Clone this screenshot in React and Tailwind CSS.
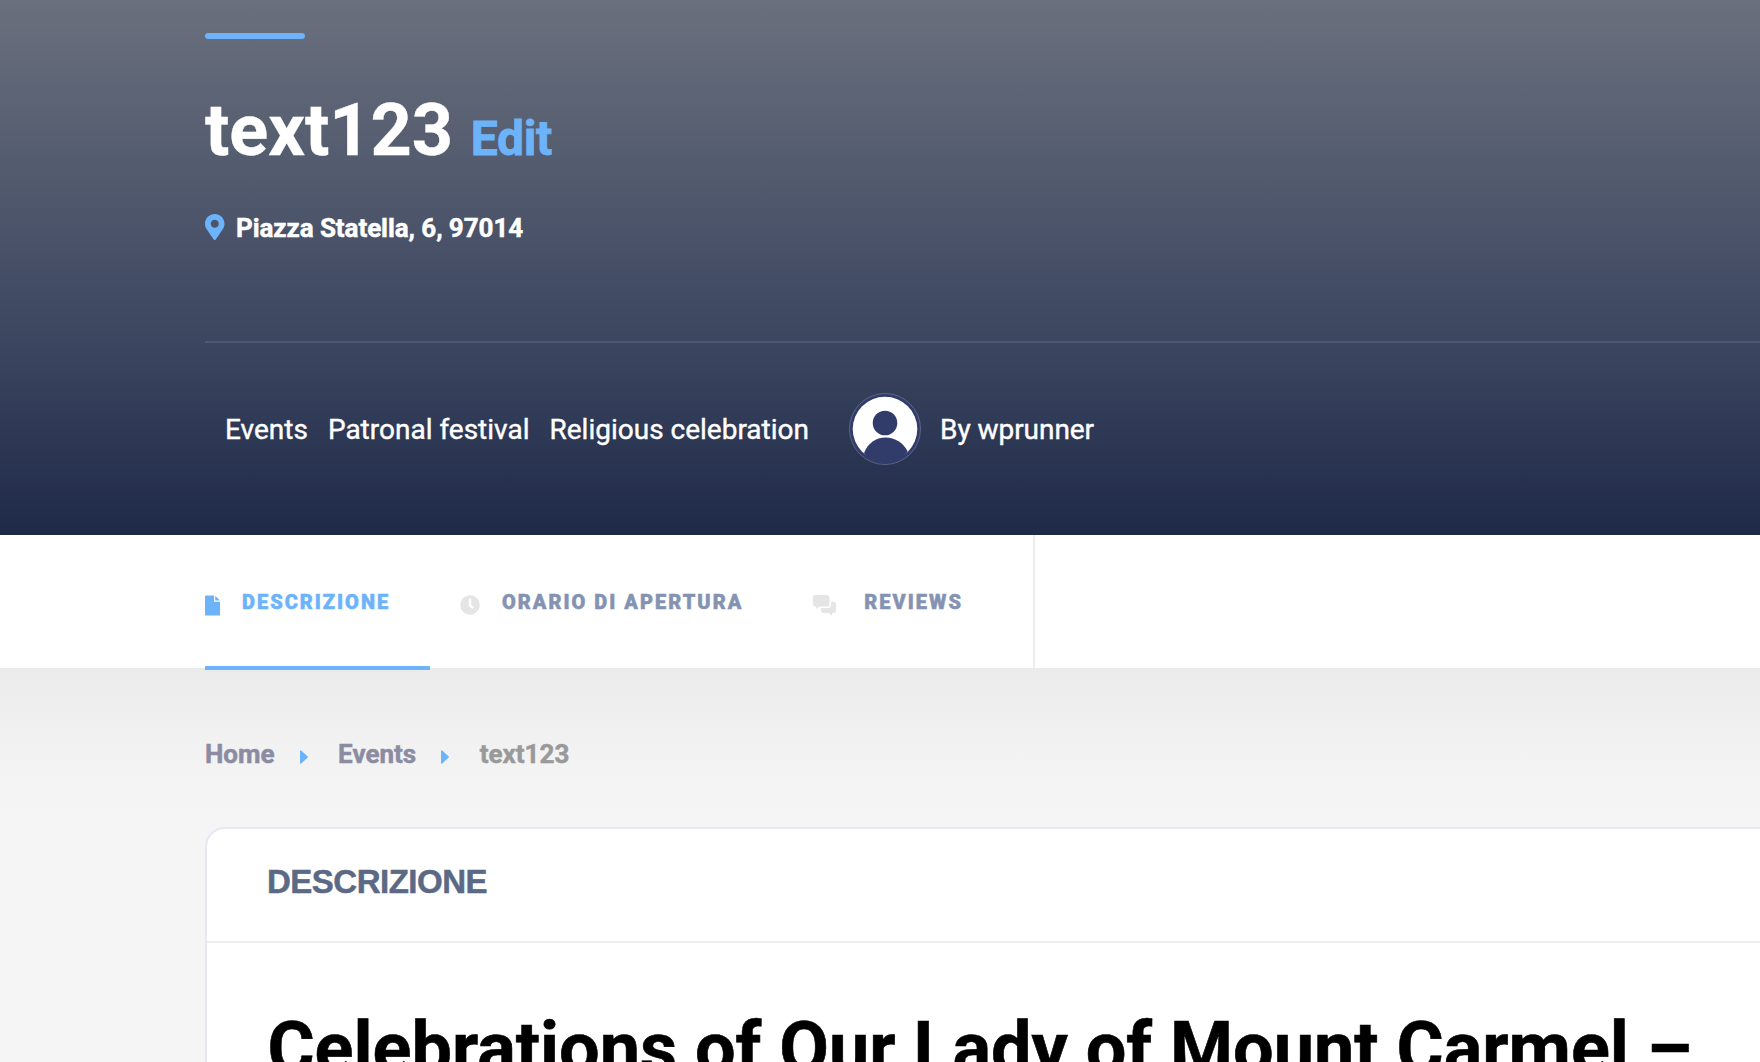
import { FaMapMarkerAlt, FaClock } from "react-icons/fa";

const categories = ["Events", "Patronal festival", "Religious celebration"];

function Avatar() {
   return (
      <svg viewBox="0 0 72 72" className="h-[72px] w-[72px] shrink-0">
         <defs>
            <clipPath id="avatar-disc">
               <circle cx="36" cy="36" r="35" />
            </clipPath>
         </defs>
         <circle cx="36" cy="36" r="35.5" fill="#323c6b" stroke="#68718f" strokeWidth="0.8" />
         <circle cx="36" cy="36" r="32.3" fill="#fff" />
         <circle cx="36" cy="30" r="12.3" fill="#323c6b" />
         <path
            clipPath="url(#avatar-disc)"
            fill="#323c6b"
            d="M15 60C19 50 27 44.5 36.500 44.500C46 44.500 54.500 50 58.700 58.500C53 66 45 72 36 72C27 72 20 67 15 60Z"
         />
      </svg>
   );
}

function FileIcon({ className }) {
   return (
      <svg viewBox="0 0 15 20" fill="currentColor" className={className}>
         <path d="M.5 0H9v5.500q0 .7.700.7H15V19.500q0 .5-.5.5H.5Q0 20 0 19.500V.5Q0 0 .5 0Z" />
         <path d="M10.200 0.200V5H15Z" />
      </svg>
   );
}

// squared double speech bubble
function CommentsIcon({ className }) {
   return (
      <svg viewBox="0 0 23 21" fill="currentColor" className={className}>
         <path d="M2.500 0H14Q16.500 0 16.500 2.500V9Q16.500 11.500 14 11.500H6.500L3.300 13.900V11.500H2.500Q0 11.500 0 9V2.500Q0 0 2.500 0Z" />
         <path d="M18 6.800H20.500Q23 6.800 23 9.300V15.500Q23 18 20.500 18H19V20.800L15.500 18H10.500Q8 18 8 15.500V13H14.500Q18 13 18 9.500Z" />
      </svg>
   );
}

function Caret() {
   return (
      <svg viewBox="0 0 8 14" fill="currentColor" className="ml-[25px] mr-[30.5px] mt-[5px] h-3.5 w-2 text-[#6db3fa]">
         <path d="M0 1.200Q0 -.3 1.200.6L7.500 6.300Q8.300 7 7.500 7.700L1.200 13.400Q0 14.300 0 12.800Z" />
      </svg>
   );
}

function Hero() {
   return (
      <header className="h-[535px] bg-linear-to-b from-[#6a707d] from-0% via-[#3b455f] via-65% to-[#1f2a49] to-100% pl-[205px] pt-[33px] text-white">
         <div className="h-1.5 w-[100px] rounded-full bg-[#6db3fa]" />
         <h1 className="mt-[50px] flex items-baseline text-[72px] font-bold leading-[84px] [-webkit-text-stroke:0.4px]">
            text123
            <a href="#edit" className="ml-[17.5px] text-[48px] leading-none tracking-[-0.3px] text-[#6db3fa] [-webkit-text-stroke:0.8px]">Edit</a>
         </h1>
         <div className="mt-[37px] flex h-9 items-center text-[26px] font-bold tracking-[-0.07px] [-webkit-text-stroke:0.5px]">
            <FaMapMarkerAlt className="mb-0.5 mr-[11.500px] h-[26px] w-[19.5px] text-[#6db3fa] [stroke:none]" />
            Piazza Statella, 6, 97014
         </div>
         <div className="mt-[95px] flex items-center border-t-2 border-[#4e5870] pl-5 pt-[50px] text-[28px] [-webkit-text-stroke:0.4px]">
            <ul className="flex gap-5 pt-0.5">
               {categories.map((name) => (
                  <li key={name}>{name}</li>
               ))}
            </ul>
            <div className="ml-[40px] flex items-center gap-[19px]">
               <Avatar />
               <span className="pt-0.5 tracking-[-0.05px]">By wprunner</span>
            </div>
         </div>
      </header>
   );
}

function Tabs() {
   return (
      <nav className="flex h-[133px] bg-white pl-[205px] text-xl font-black tracking-[2px] text-[#8593b3]">
         <div className="flex w-[830px] border-r-2 border-[#ededed]">
            <a href="#descrizione" className="flex h-[135px] w-[225px] items-center border-b-4 border-[#6db3fa] pt-0.5 text-[#6db3fa]">
               <FileIcon className="mr-[22px] mt-2 h-[21px] w-[15px]" />
               <span className="[-webkit-text-stroke:0.5px]">DESCRIZIONE</span>
            </a>
            <a href="#orario" className="ml-[30px] flex h-[133px] items-center">
               <FaClock className="mr-[22px] mt-[7px] h-5 w-5 text-[#e5e5e5]" />
               <span className="[-webkit-text-stroke:0.5px]">ORARIO DI APERTURA</span>
            </a>
            <a href="#reviews" className="ml-[70px] flex h-[133px] items-center">
               <CommentsIcon className="mr-7 mt-[7px] h-[21px] w-[23px] text-[#e5e5e5]" />
               <span className="[-webkit-text-stroke:0.5px]">REVIEWS</span>
            </a>
         </div>
      </nav>
   );
}

function Breadcrumbs() {
   return (
      <div className="flex h-9 items-center text-[26px] font-bold text-[#8b8ca2] [-webkit-text-stroke:0.5px]">
         <span>Home</span>
         <Caret />
         <span>Events</span>
         <Caret />
         <span className="text-[#999]">text123</span>
      </div>
   );
}

export default function App() {
   return (
      <div className="h-[1062px] w-[1760px] overflow-hidden bg-[#f5f5f5] font-[Roboto,sans-serif]">
         <Hero />
         <Tabs />
         <main className="h-[394px] bg-linear-to-b from-[#ebebeb] via-[#f2f2f2] via-[80px] to-[#f5f5f5] to-[150px] pl-[205px] pt-[68px]">
            <Breadcrumbs />
            <section className="mt-[55px] h-[400px] rounded-tl-[20px] border-l-2 border-t-2 border-[#e7e7f2] bg-white">
               <div className="h-[114px] border-b-2 border-[#ededed] pl-[60px] pt-[33px]">
                  <h2 className="font-['Liberation_Sans',Arial,sans-serif] text-[33px] font-bold leading-10 tracking-[-0.5px] text-[#5b6985] [-webkit-text-stroke:0.5px]">DESCRIZIONE</h2>
               </div>
               <h3 className="whitespace-nowrap pl-[60.5px] pt-[64px] text-[72px] font-bold leading-[84px] text-black [-webkit-text-stroke:0.6px]">
                  Celebrations of Our Lady of Mount Carmel –
               </h3>
            </section>
         </main>
      </div>
   );
}
